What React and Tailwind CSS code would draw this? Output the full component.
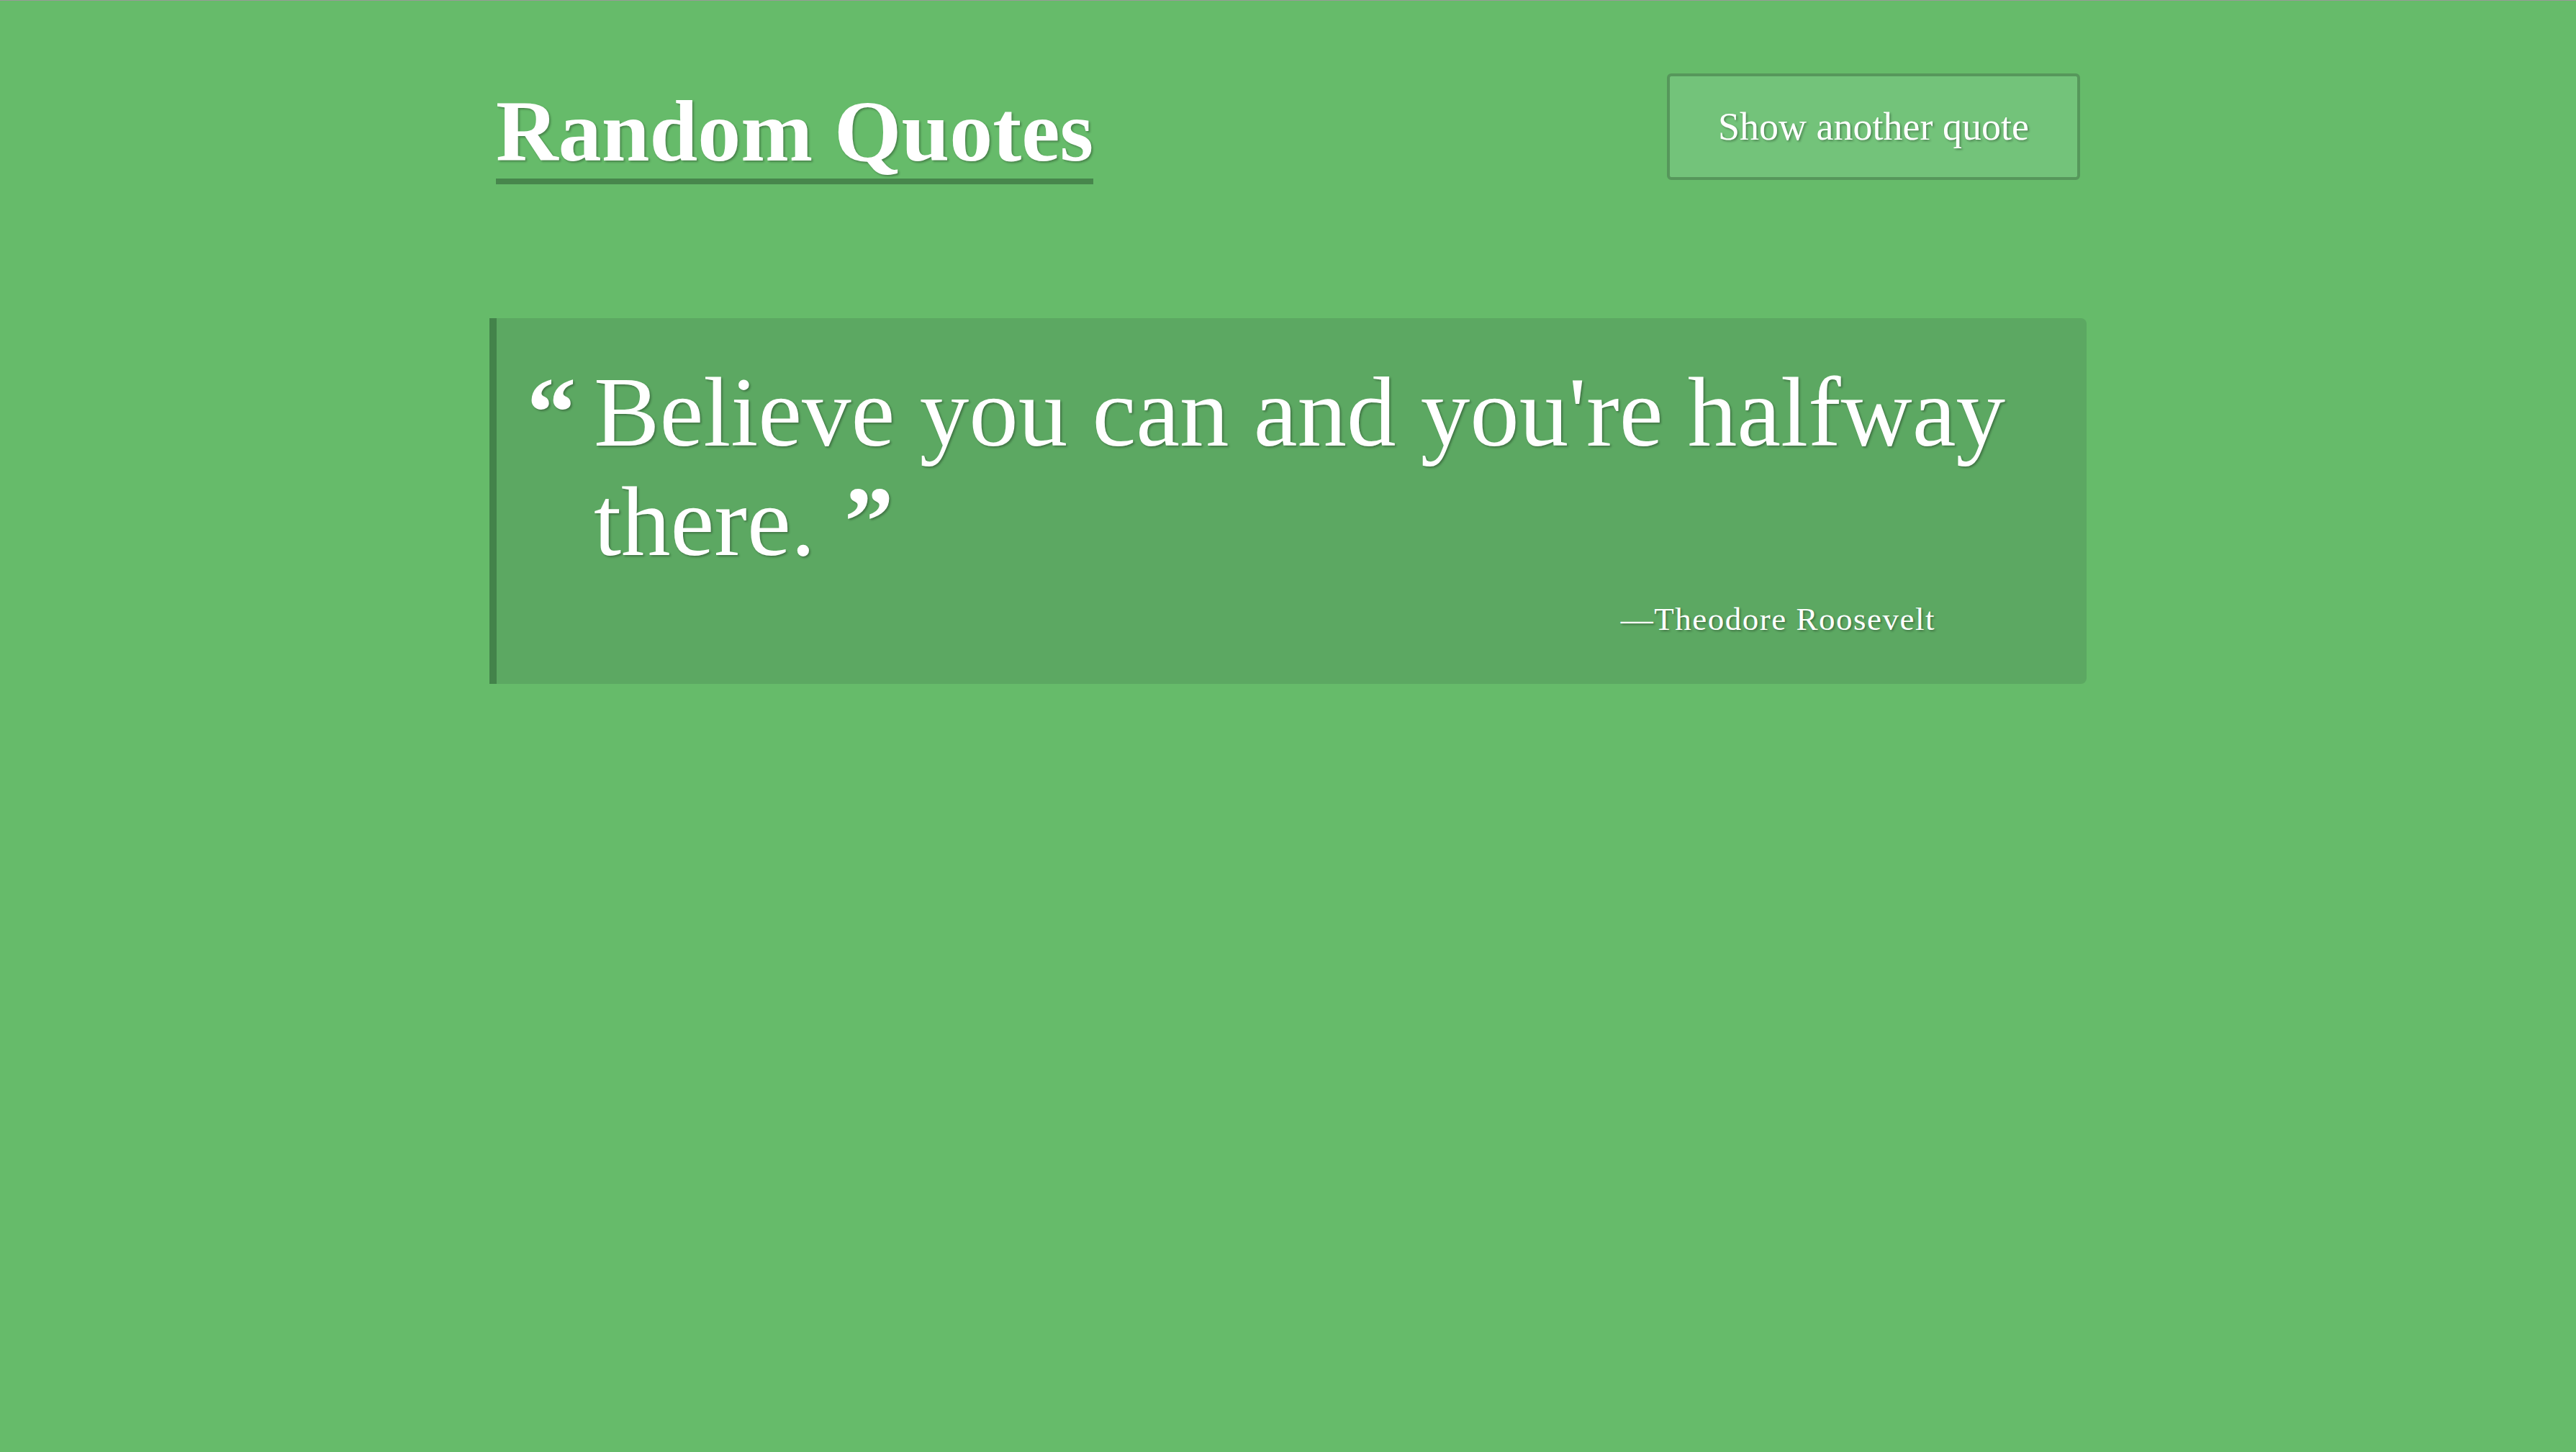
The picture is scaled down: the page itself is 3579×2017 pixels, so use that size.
const shadow = '[text-shadow:2px_2px_3px_rgba(0,0,0,0.3)]';

export default function App() {
  return (
    <div className="min-h-screen bg-[#66bb6a] font-['Liberation_Serif',serif] text-white">
      <div className="h-px bg-[#9a9a9a]" />
      <div className="mx-auto w-[2219px]">
        <header className="flex items-start justify-between px-[9px] pt-[101px]">
          <h1
            className={`mt-[15px] border-b-[8px] border-[#47864c] text-[120px] font-bold leading-[131px] ${shadow}`}
          >
            Random Quotes
          </h1>
          <button
            type="button"
            className={`flex h-[148px] w-[574px] items-center justify-center rounded-[6px] border-[4px] border-[#56975b] bg-[#73c37a] text-[54px] ${shadow}`}
          >
            Show another quote
          </button>
        </header>

        <blockquote className="mt-[186px] rounded-r-[8px] border-l-[10px] border-[#43834a] bg-[#5ca862] pb-[64px] pt-[55px]">
          <div className="flex">
            <span className={`w-[135px] shrink-0 pl-[42px] text-[137px] font-bold leading-[152px] ${shadow}`}>
              “
            </span>
            <p className={`pr-[60px] text-[137px] leading-[152px] ${shadow}`}>
              Believe you can and you're halfway there.
              <span className="ml-[40px] inline-block font-bold">”</span>
            </p>
          </div>
          <p className={`mt-[33px] pr-[210px] text-right text-[45px] leading-[52px] tracking-[1.5px] ${shadow}`}>
            —Theodore Roosevelt
          </p>
        </blockquote>
      </div>
    </div>
  );
}
